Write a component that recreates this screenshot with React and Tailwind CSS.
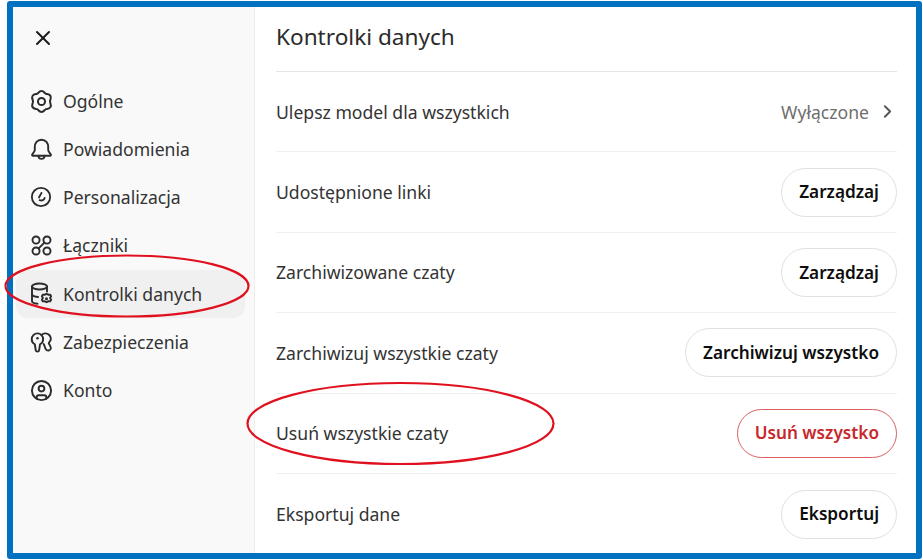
import React from "react";
import { X, ChevronRight, CircleUser } from "lucide-react";

const F = { fontFamily: '"Noto Sans", sans-serif' };

const Ic = ({ children, size = 22, sw = 2 }) => (
  <svg width={size} height={size} viewBox="0 0 24 24" fill="none" stroke="#2b2b2b" strokeWidth={sw} strokeLinecap="round" strokeLinejoin="round" className="shrink-0">
    {children}
  </svg>
);

const Gear = () => (
  <Ic size={25} sw={1.9}>
    <path d="M16.25 4.64C17.5 5.1 19.4 4.6 20.6 6.6C21.8 8.7 20 10.5 20.2 12C20 13.5 21.8 15.3 20.6 17.4C19.4 19.4 17.5 18.9 16.25 19.36C15 19.8 14.4 22 12 22C9.6 22 9 19.8 7.75 19.36C6.5 18.9 4.6 19.4 3.4 17.4C2.2 15.3 4 13.5 3.8 12C4 10.5 2.2 8.7 3.4 6.6C4.6 4.6 6.5 5.1 7.75 4.64C9 4.2 9.6 2 12 2C14.4 2 15 4.2 16.25 4.64Z" />
    <circle cx="12" cy="12" r="3.4" />
  </Ic>
);
const BellIc = () => (
  <Ic size={23} sw={2}>
    <path d="M12 1.800C7.500 1.800 5 5.500 5 9.500V12.500C5 14.300 2.800 15.800 2.200 17.400C2 18 2.400 18.500 3 18.500H21C21.600 18.500 22 18 21.800 17.400C21.200 15.800 19 14.300 19 12.500V9.500C19 5.500 16.500 1.800 12 1.800Z" />
    <path d="M8.800 18.500C8.800 20.300 10.200 21.800 12 21.800S15.200 20.300 15.200 18.500" />
  </Ic>
);
const Person = () => (
  <Ic>
    <circle cx="12" cy="12" r="10" />
    <path d="M12.500 7.500 9.800 12.600" />
    <path d="M10.500 15.500c2.600.8 4.800-.2 5.500-2.500" />
  </Ic>
);
const Link = () => (
  <Ic size={23}>
    <circle cx="6.300" cy="6.300" r="3.700" />
    <circle cx="17.700" cy="6.300" r="3.700" />
    <circle cx="6.300" cy="17.700" r="3.700" />
    <circle cx="17.700" cy="17.700" r="3.700" />
    <path d="M15 9l-6 6" />
  </Ic>
);
const Data = () => (
  <Ic size={24} sw={1.9}>
    <ellipse cx="10.500" cy="4.500" rx="7.500" ry="3" />
    <path d="M3 4.500v14.500c0 1.600 2.500 2.600 5.500 2.800" />
    <path d="M18 4.500v5" />
    <path d="M3 12c0 1.500 2.500 2.700 6 3" />
    <path d="M17.500 11.800l1.700.9 1.900-.1 1 1.700-1 1.700 1 1.700-1 1.700-1.900-.1-1.700.9-1.700-.9-1.900.1-1-1.700 1-1.700-1-1.700 1-1.700 1.900.1z" />
    <circle cx="17.500" cy="16.800" r="1.500" fill="#2b2b2b" stroke="none" />
  </Ic>
);
const Key = () => (
  <Ic size={23}>
    <path d="M7.800 2.500C4.500 2.500 1.800 5.200 1.800 8.500c0 2.300 1.300 4.300 3.200 5.300l1 6.400c.3 1.800 3.200 1.800 3.500 0l1-6.400c1.900-1 3.200-3 3.200-5.300C13.700 5.200 11.100 2.500 7.800 2.500Z" />
    <path d="M12 4.200C13 3.200 14.600 2.500 16 2.500C19.100 2.500 21.800 5.100 21.800 8.200C21.800 10 20.100 11.500 19.600 12.500C19.100 13.500 22 15.500 21.800 18C21.500 20.700 18 21.200 16.500 19C15.500 17.500 15.500 15.500 14.200 13.500" />
    <circle cx="7.800" cy="7.500" r="1.300" fill="#2b2b2b" stroke="none" />
  </Ic>
);

const nav = [
  [<Gear />, "Ogólne"],
  [<BellIc />, "Powiadomienia"],
  [<Person />, "Personalizacja"],
  [<Link />, "Łączniki"],
  [<Data />, "Kontrolki danych", true],
  [<Key />, "Zabezpieczenia"],
  [<CircleUser size={23} color="#2b2b2b" strokeWidth={2} className="shrink-0" />, "Konto"],
];

const Btn = ({ children, red }) => (
  <button
    className={`h-[49px] px-[17px] rounded-full border bg-white text-[17.2px] font-semibold whitespace-nowrap ${
      red ? "border-[#d9605f] text-[#c8282b]" : "border-[#e0e0e0] text-[#0d0d0d]"
    }`}
    style={F}
  >
    {children}
  </button>
);

const rows = [
  ["Ulepsz model dla wszystkich", null],
  ["Udostępnione linki", <Btn>Zarządzaj</Btn>],
  ["Zarchiwizowane czaty", <Btn>Zarządzaj</Btn>],
  ["Zarchiwizuj wszystkie czaty", <Btn>Zarchiwizuj wszystko</Btn>],
  ["Usuń wszystkie czaty", <Btn red>Usuń wszystko</Btn>],
  ["Eksportuj dane", <Btn>Eksportuj</Btn>],
];

export default function App() {
  return (
    <div className="relative w-[923px] h-[560px] bg-white overflow-hidden pt-px pl-[7px]" style={F}>
      <div className="w-[915px] h-[558px] border-[6px] border-[#0070c0] rounded-[3px] flex bg-white">
        <aside className="w-[242px] shrink-0 bg-[#f9f9f9] border-r border-[#ededed] pl-[3px] pr-[9px]">
          <div className="h-[70px] pl-[15px] pt-[19px]">
            <X size={24} color="#1a1a1a" strokeWidth={2} />
          </div>
          <nav className="flex flex-col">
            {nav.map(([icon, label, active]) => (
              <div
                key={label}
                className={`h-[48.2px] flex items-center gap-[11px] pl-[14px] rounded-[12px] text-[17.6px] text-[#333333] ${
                  active ? "bg-[#f0f0f0]" : ""
                }`}
              >
                <span className="w-[22px] flex justify-center shrink-0">{icon}</span>
                <span>{label}</span>
              </div>
            ))}
          </nav>
        </aside>
        <main className="flex-1 pl-[21px] pr-[19px]">
          <div className="h-[65px] pt-[12px] border-b border-[#e5e5e5] text-[22.6px] leading-[36px] text-[#2b2b2b]">
            Kontrolki danych
          </div>
          {rows.map(([label, right], i) => (
            <div
              key={label}
              className={`h-[80.4px] flex items-center justify-between text-[17.6px] text-[#333333] ${
                i < rows.length - 1 ? "border-b border-[#f0f0f0]" : ""
              }`}
            >
              <span>{label}</span>
              {right ?? (
                <span className="flex items-center gap-[8px] -mr-px text-[#6e6e6e]">
                  Wyłączone
                  <ChevronRight size={21} color="#555555" strokeWidth={2.2} />
                </span>
              )}
            </div>
          ))}
        </main>
      </div>
      <svg width="923" height="560" className="absolute inset-0 pointer-events-none" fill="none" stroke="#e0101f" strokeWidth="2.2">
        <ellipse cx="127" cy="286" rx="121.500" ry="30.500" />
        <ellipse cx="400.500" cy="423.500" rx="153" ry="40.500" />
      </svg>
    </div>
  );
}
